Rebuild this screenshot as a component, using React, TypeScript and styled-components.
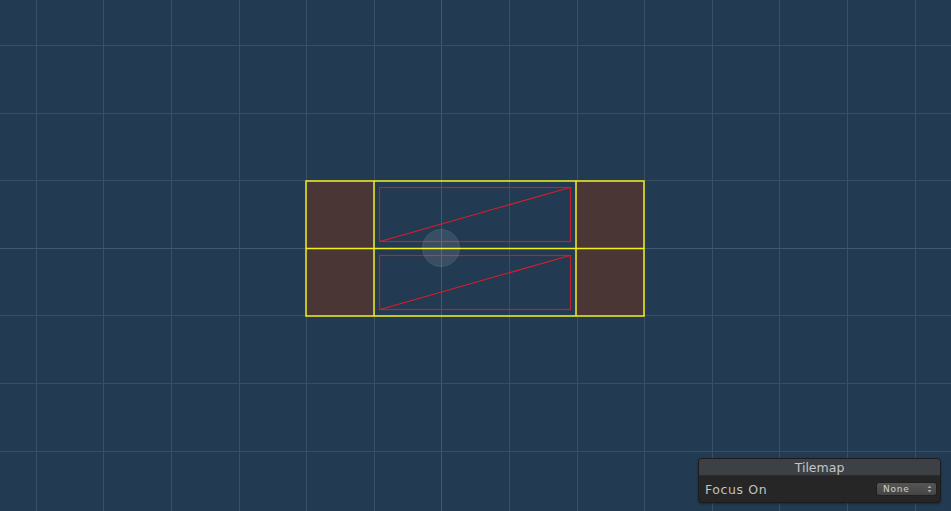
import React from "react";
import styled, { createGlobalStyle } from "styled-components";

const GlobalStyle = createGlobalStyle`
  html, body {
    margin: 0;
    padding: 0;
    background: #223a52;
    overflow: hidden;
  }
`;

const SceneView = styled.div`
  position: relative;
  width: 951px;
  height: 511px;
  background: #223a52;
  font-family: "DejaVu Sans", "Liberation Sans", sans-serif;
`;

const Canvas = styled.svg`
  display: block;
`;

const Overlay = styled.div`
  position: absolute;
  right: 10px;
  bottom: 8px;
  width: 241px;
  display: flex;
  flex-direction: column;
  border: 1px solid #1c1c1c;
  border-radius: 4px;
  overflow: hidden;
  background: #262626;
  box-shadow: 0 1px 2px rgba(0, 0, 0, 0.35);
`;

const OverlayTitle = styled.div`
  height: 16px;
  line-height: 18px;
  text-align: center;
  font-size: 12.5px;
  color: #c6c6c6;
  background: #3d4045;
  border-bottom: 1px solid #2a2c2f;
`;

const OverlayRow = styled.div`
  height: 26px;
  display: flex;
  align-items: center;
  justify-content: space-between;
  padding: 0 3px 0 6px;
`;

const Label = styled.span`
  font-size: 12.5px;
  letter-spacing: 0.6px;
  color: #c2c2c2;
`;

const Dropdown = styled.div`
  width: 61px;
  height: 14px;
  box-sizing: border-box;
  display: flex;
  align-items: center;
  justify-content: space-between;
  padding: 0 4px 0 6px;
  border: 1px solid #202020;
  border-radius: 3px;
  background: linear-gradient(#555555, #454545);
  font-size: 9px;
  letter-spacing: 0.8px;
  color: #cfcfcf;
`;

const GRID = 67.6;
const OX = 35.7;
const OY = 45;

const px = (v: number) => Math.round(v) + 0.5;

const verticals = Array.from({ length: 14 }, (_, i) => px(OX + GRID * i)).filter((x) => x < 951);
const horizontals = Array.from({ length: 8 }, (_, i) => px(OY + GRID * i)).filter((y) => y < 511);

const Scene = () => (
  <Canvas width={951} height={511} viewBox="0 0 951 511">
    {verticals.map((x) => (
      <line key={`v${x}`} x1={x} y1={0} x2={x} y2={511} stroke={x === 441.5 ? "#43586d" : "#3a4f65"} strokeWidth={1} />
    ))}
    {horizontals.map((y) => (
      <line key={`h${y}`} x1={0} y1={y} x2={951} y2={y} stroke={y === 248.5 ? "#43586d" : "#3a4f65"} strokeWidth={1} />
    ))}

    {/* brown tiles */}
    <rect x={306} y={181} width={68} height={135} fill="#4a3735" />
    <rect x={576} y={181} width={68} height={135} fill="#4a3735" />

    {/* collider shapes */}
    {[187, 255].map((y) => (
      <g key={y}>
        <rect x={379.5} y={y + 0.5} width={191} height={54} fill="none" stroke="#c0202e" strokeWidth={1.2} />
        <line x1={380} y1={y + 54.5} x2={570} y2={y + 0.5} stroke="#e01c2a" strokeWidth={1.1} />
      </g>
    ))}

    {/* yellow tile outlines */}
    <g stroke="#f2f21a" strokeWidth={1.5} fill="none">
      <rect x={306} y={181} width={338} height={135} />
      <line x1={306} y1={248.5} x2={644} y2={248.5} />
      <line x1={374} y1={181} x2={374} y2={316} />
      <line x1={576} y1={181} x2={576} y2={316} />
    </g>

    {/* pivot gizmo */}
    <circle cx={441} cy={248} r={18.5} fill="rgba(255,255,255,0.1)" stroke="rgba(255,255,255,0.1)" strokeWidth={1} />
  </Canvas>
);

const UpDown = () => (
  <svg width={5} height={8} viewBox="0 0 5 8">
    <path d="M2.5 0.5 L4.5 3 L0.5 3 Z" fill="#a8a8a8" />
    <path d="M2.5 7.5 L4.5 5 L0.5 5 Z" fill="#a8a8a8" />
  </svg>
);

export default function App() {
  return (
    <>
      <GlobalStyle />
      <SceneView>
        <Scene />
        <Overlay>
          <OverlayTitle>Tilemap</OverlayTitle>
          <OverlayRow>
            <Label>Focus On</Label>
            <Dropdown>
              <span>None</span>
              <UpDown />
            </Dropdown>
          </OverlayRow>
        </Overlay>
      </SceneView>
    </>
  );
}
